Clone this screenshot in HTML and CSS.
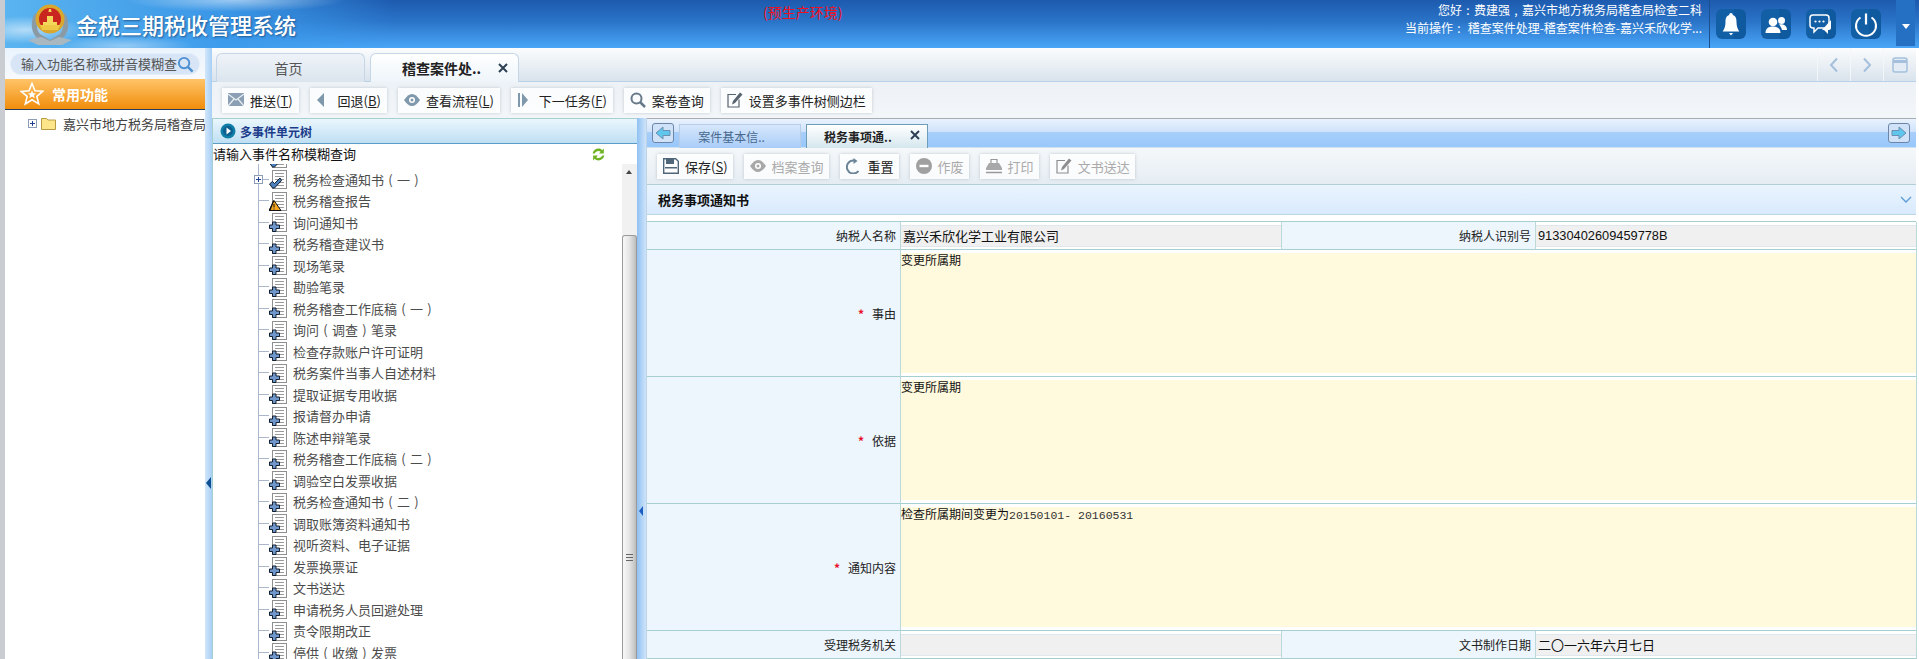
FILE: index.html
```html
<!DOCTYPE html>
<html lang="zh-CN">
<head>
<meta charset="utf-8">
<title>金税三期税收管理系统</title>
<link rel="stylesheet" href="styles.css">
</head>
<body>
<svg class="defs" width="0" height="0" aria-hidden="true">
  <symbol id="doc" viewBox="0 0 18 20">
    <rect x="3.5" y="1.5" width="14" height="18" fill="#fff" stroke="#8f8f8f"/>
    <path d="M6 4.500h9M6 7.500h9M6 10.500h9M6 13.500h9M6 16.500h9" stroke="#999"/>
  </symbol>
  <symbol id="b-plus" viewBox="0 0 18 20">
    <use href="#doc"/>
    <path d="M3.500 10h3.500v3h3.500v3.500H7v3H3.500v-3H.5V13h3z" fill="#6f97cb" stroke="#141f2e"/>
  </symbol>
  <symbol id="b-check" viewBox="0 0 18 20">
    <use href="#doc"/>
    <path d="M0.5 15l3-2.500 2 2 5.500-5.500 1.500 2.500-7 7.500h-2z" fill="#4c80bd" stroke="#141f2e"/>
  </symbol>
  <symbol id="b-warn" viewBox="0 0 18 20">
    <use href="#doc"/>
    <path d="M5 9.500l7 10H0z" fill="#f5a623" stroke="#111"/>
    <path d="M0 19.500h1.500L5 10V9.500L4 9.500z" fill="#111"/>
    <path d="M5 13v3.500M5 17.500v1" stroke="#111"/>
  </symbol>
</svg>

<div class="app">
  <header class="top">
    <svg class="emblem" viewBox="0 0 46 46" width="46" height="46">
      <path d="M9 36C3 29 4 18 8 12l4 3c-3 6-3 13 1 18l10 6 10-6c4-5 4-12 1-18l4-3c4 6 5 17-1 24l-8 5-6 3-6-3z" fill="#8b9ba6"/>
      <path d="M1 39l13-3 9 4 9-4 13 3-10 5H11z" fill="#a9b7c1"/>
      <circle cx="23" cy="18" r="14.500" fill="#d9a62e"/>
      <circle cx="23" cy="18" r="11" fill="#c8261e"/>
      <path d="M13 24h20l-2 5H15z" fill="#efc945"/>
      <path d="M16 21h14v3H16zM20 15h6v6h-6zM22 8h2l.6 3h-3.200z" fill="#f3d65a"/>
    </svg>
    <h1 class="brand">金税三期税收管理系统</h1>
    <span class="env">(预生产环境)</span>
    <div class="userinfo">
      <p>您好<span class="par">:</span>费建强<span class="par">,</span>嘉兴市地方税务局稽查局检查二科</p>
      <p>当前操作<span class="par">:</span> 稽查案件处理-稽查案件检查-嘉兴禾欣化学...</p>
    </div>
    <div class="hicons">
      <span class="hicon"><svg viewBox="0 0 30 30" width="30" height="30"><path d="M15 4c1.200 0 1.700.8 1.800 2 3 1 3.700 3.500 3.700 7 0 4 1 7 2.800 9.500H6.700C8.500 20 9.500 17 9.500 13c0-3.500.7-6 3.700-7 .1-1.200.6-2 1.800-2z" fill="#fff"/><path d="M13 24h4l-2 2.500z" fill="#fff"/></svg></span>
      <span class="hicon"><svg viewBox="0 0 30 30" width="30" height="30"><circle cx="12" cy="13" r="4.300" fill="#fff"/><circle cx="20.500" cy="11.500" r="3.500" fill="#fff"/><path d="M4.500 24c0-4.500 3-6.500 7.500-6.500s7.500 2 7.500 6.500z" fill="#fff"/><path d="M18 15.500c3-.8 8 .2 8 5.500h-5c-.5-2-1.500-3.800-3-5.500z" fill="#fff"/></svg></span>
      <span class="hicon"><svg viewBox="0 0 30 30" width="30" height="30"><path d="M7 6h13c2 0 3 1 3 3v7c0 2-1 3-3 3h-8l-4 4v-4H7c-2 0-3-1-3-3V9c0-2 1-3 3-3z" fill="#135fa6" stroke="#fff" stroke-width="1.500"/><circle cx="9.500" cy="12.500" r="1.100" fill="#fff"/><circle cx="13.500" cy="12.500" r="1.100" fill="#fff"/><circle cx="17.500" cy="12.500" r="1.100" fill="#fff"/><path d="M25 11v8c0 1-1 2-2 2h-1v4l-4-4h-2z" fill="#fff"/></svg></span>
      <span class="hicon"><svg viewBox="0 0 30 30" width="30" height="30"><path d="M9.500 8.500a10 10 0 1 0 11 0" fill="none" stroke="#fff" stroke-width="2"/><path d="M15 4.500v11" stroke="#fff" stroke-width="2.200"/></svg></span>
    </div>
    <div class="hmenu"><span class="caret"></span></div>
  </header>

  <div class="work">
    <aside class="side">
      <div class="side-search">
        <div class="searchbox">
          <span class="search-text">输入功能名称或拼音模糊查</span>
          <svg viewBox="0 0 18 18" width="17" height="17"><circle cx="7.500" cy="7.500" r="5.500" fill="none" stroke="#4d8fd0" stroke-width="2"/><path d="M11.500 11.500l5 5" stroke="#4d8fd0" stroke-width="2.500"/></svg>
        </div>
      </div>
      <div class="side-fav">
        <svg viewBox="0 0 24 24" width="24" height="24"><path d="M12 1.500l3 7.200 7.800.6-6 5 1.900 7.600L12 17.800 5.300 22l1.900-7.600-6-5 7.800-.6z" fill="none" stroke="#fff" stroke-width="1.600"/><path d="M12 8.500l1.200 2.700 3 .2-2.300 1.900.8 2.900-2.700-1.600-2.700 1.600.8-2.900-2.300-1.900 3-.2z" fill="#fff"/></svg>
        <span>常用功能</span>
      </div>
      <div class="side-tree">
        <span class="pbox"></span>
        <svg viewBox="0 0 15 14" width="15" height="14"><path d="M.5 2.500h5l1.500 1.500h7.500v9.500H.5z" fill="#fde68a" stroke="#b89a44"/></svg>
        <span class="side-label">嘉兴市地方税务局稽查局</span>
      </div>
    </aside>
    <div class="split"></div>

    <main class="main">
      <nav class="tabs">
        <span class="tab">首页</span>
        <span class="tab tab-on">稽查案件处..<svg class="x" viewBox="0 0 10 10" width="10" height="10"><path d="M1 1l8 8M9 1l-8 8" stroke="#2d4054" stroke-width="2"/></svg></span>
        <div class="tabs-ctl">
          <span class="ctl"><svg viewBox="0 0 12 16" width="12" height="16"><path d="M9 1.500L3 8l6 6.500" fill="none" stroke="#a4c0dc" stroke-width="2"/></svg></span>
          <span class="ctl"><svg viewBox="0 0 12 16" width="12" height="16"><path d="M3 1.500L9 8l-6 6.500" fill="none" stroke="#a4c0dc" stroke-width="2"/></svg></span>
          <span class="ctl"><svg viewBox="0 0 16 16" width="16" height="16"><rect x="1" y="1" width="14" height="14" rx="2" fill="#e3ecf4" stroke="#a4c0dc" stroke-width="1.500"/><path d="M1 4.500h14" stroke="#a4c0dc" stroke-width="3"/></svg></span>
        </div>
      </nav>

      <div class="bar bar-main">
        <button class="btn"><span class="ico"><svg viewBox="0 0 16 14" width="16" height="14"><rect width="16" height="13" fill="#8a9fb3"/><path d="M0 1l8 6 8-6M0 13l6-7M16 13l-6-7" fill="none" stroke="#e8eef3" stroke-width="1.200"/></svg></span>推送(<u>T</u>)</button>
        <button class="btn"><span class="ico"><svg viewBox="0 0 16 16" width="16" height="16"><path d="M8 1v14L1 8z" fill="#7f98ab"/></svg></span>回退(<u>B</u>)</button>
        <button class="btn"><span class="ico"><svg viewBox="0 0 16 14" width="16" height="14"><path d="M0 7c3-4 5-6 8-6s5 2 8 6c-3 4-5 6-8 6s-5-2-8-6z" fill="#7f98ab"/><circle cx="8" cy="7" r="3" fill="#fff"/><circle cx="8" cy="7" r="1.500" fill="#7f98ab"/></svg></span>查看流程(<u>L</u>)</button>
        <button class="btn"><span class="ico"><svg viewBox="0 0 16 16" width="16" height="16"><path d="M1 1h2v14H1zM5 1l6 7-6 7z" fill="#7f98ab"/></svg></span>下一任务(<u>F</u>)</button>
        <button class="btn"><span class="ico"><svg viewBox="0 0 16 16" width="16" height="16"><circle cx="6.500" cy="6.500" r="5" fill="none" stroke="#67798a" stroke-width="2"/><path d="M10 10l5 5" stroke="#67798a" stroke-width="2.500"/></svg></span>案卷查询</button>
        <button class="btn"><span class="ico"><svg viewBox="0 0 16 16" width="16" height="16"><path d="M12 7.500V15H1V2.500h8" fill="none" stroke="#57636e" stroke-width="1.200"/><path d="M13 .5l2.500 2L8 11l-3 1.500L6 9z" fill="#57636e"/></svg></span>设置多事件树侧边栏</button>
      </div>

      <div class="panes">
        <section class="treepane">
          <div class="tree-head">
            <svg viewBox="0 0 16 16" width="16" height="16"><circle cx="8" cy="8" r="7.500" fill="#0f7fa8"/><circle cx="8" cy="8" r="5" fill="#0c5f8f"/><path d="M6.500 4.500L11 8l-4.500 3.500z" fill="#fff"/></svg>
            <span>多事件单元树</span>
          </div>
          <div class="tree-filter">
            <span>请输入事件名称模糊查询</span>
            <svg viewBox="0 0 14 14" width="15" height="15"><path d="M1.500 6C2 3 4.500 1.500 7 1.500c1.500 0 2.800.6 3.500 1.500L12 1.500V6H7.500l1.500-1.500C8.500 4 7.800 3.700 7 3.700 5.500 3.700 4 4.600 3.500 6zM12.500 8C12 11 9.500 12.500 7 12.500c-1.500 0-2.800-.6-3.500-1.500L2 12.500V8h4.500L5 9.500c.5.500 1.200.8 2 .8 1.500 0 3-.9 3.500-2.300z" fill="#6fb324"/></svg>
          </div>
          <div class="tree-body">
            <ul class="tree">
              <li class="node"><svg class="nico"><use href="#b-check"/></svg><span class="nlabel">&nbsp;</span></li>
              <li class="node node-exp"><span class="pbox pbox-node"></span><svg class="nico"><use href="#b-check"/></svg><span class="nlabel">税务检查通知书<span class="par">(</span>一<span class="par">)</span></span></li>
              <li class="node"><svg class="nico"><use href="#b-warn"/></svg><span class="nlabel">税务稽查报告</span></li>
              <li class="node"><svg class="nico"><use href="#b-plus"/></svg><span class="nlabel">询问通知书</span></li>
              <li class="node"><svg class="nico"><use href="#b-plus"/></svg><span class="nlabel">税务稽查建议书</span></li>
              <li class="node"><svg class="nico"><use href="#b-plus"/></svg><span class="nlabel">现场笔录</span></li>
              <li class="node"><svg class="nico"><use href="#b-plus"/></svg><span class="nlabel">勘验笔录</span></li>
              <li class="node"><svg class="nico"><use href="#b-plus"/></svg><span class="nlabel">税务稽查工作底稿<span class="par">(</span>一<span class="par">)</span></span></li>
              <li class="node"><svg class="nico"><use href="#b-plus"/></svg><span class="nlabel">询问<span class="par">(</span>调查<span class="par">)</span>笔录</span></li>
              <li class="node"><svg class="nico"><use href="#b-plus"/></svg><span class="nlabel">检查存款账户许可证明</span></li>
              <li class="node"><svg class="nico"><use href="#b-plus"/></svg><span class="nlabel">税务案件当事人自述材料</span></li>
              <li class="node"><svg class="nico"><use href="#b-plus"/></svg><span class="nlabel">提取证据专用收据</span></li>
              <li class="node"><svg class="nico"><use href="#b-plus"/></svg><span class="nlabel">报请督办申请</span></li>
              <li class="node"><svg class="nico"><use href="#b-plus"/></svg><span class="nlabel">陈述申辩笔录</span></li>
              <li class="node"><svg class="nico"><use href="#b-plus"/></svg><span class="nlabel">税务稽查工作底稿<span class="par">(</span>二<span class="par">)</span></span></li>
              <li class="node"><svg class="nico"><use href="#b-plus"/></svg><span class="nlabel">调验空白发票收据</span></li>
              <li class="node"><svg class="nico"><use href="#b-plus"/></svg><span class="nlabel">税务检查通知书<span class="par">(</span>二<span class="par">)</span></span></li>
              <li class="node"><svg class="nico"><use href="#b-plus"/></svg><span class="nlabel">调取账簿资料通知书</span></li>
              <li class="node"><svg class="nico"><use href="#b-plus"/></svg><span class="nlabel">视听资料、电子证据</span></li>
              <li class="node"><svg class="nico"><use href="#b-plus"/></svg><span class="nlabel">发票换票证</span></li>
              <li class="node"><svg class="nico"><use href="#b-plus"/></svg><span class="nlabel">文书送达</span></li>
              <li class="node"><svg class="nico"><use href="#b-plus"/></svg><span class="nlabel">申请税务人员回避处理</span></li>
              <li class="node"><svg class="nico"><use href="#b-plus"/></svg><span class="nlabel">责令限期改正</span></li>
              <li class="node"><svg class="nico"><use href="#b-plus"/></svg><span class="nlabel">停供<span class="par">(</span>收缴<span class="par">)</span>发票</span></li>
            </ul>
            <div class="sb">
              <span class="sb-up"></span>
              <div class="sb-thumb"><span class="sb-grip"></span></div>
            </div>
          </div>
        </section>

        <div class="split split-in"></div>

        <section class="form">
          <div class="ftabs">
            <span class="scroll-btn"><svg viewBox="0 0 16 14" width="16" height="14"><path d="M8 1L1 7l7 6V9.500h7v-5H8z" fill="#5fc6ee" stroke="#6e8fb0"/></svg></span>
            <span class="ftab">案件基本信..</span>
            <span class="ftab ftab-on">税务事项通..<svg class="x" viewBox="0 0 10 10" width="10" height="10"><path d="M1 1l8 8M9 1l-8 8" stroke="#2d4054" stroke-width="2"/></svg></span>
            <span class="scroll-btn scroll-end"><svg viewBox="0 0 16 14" width="16" height="14"><path d="M8 1l7 6-7 6V9.500H1v-5h7z" fill="#5fc6ee" stroke="#6e8fb0"/></svg></span>
          </div>
          <div class="bar bar-form">
            <button class="btn"><span class="ico"><svg viewBox="0 0 16 16" width="16" height="16"><path d="M.7.7h12l2.600 2.600v12H.7z" fill="#fff" stroke="#50677a" stroke-width="1.400"/><path d="M3 1h8v5H3zM2 9h12v1.500H2z" fill="#50677a"/></svg></span>保存(<u>S</u>)</button>
            <button class="btn off"><span class="ico"><svg viewBox="0 0 16 14" width="16" height="14"><path d="M0 7c3-4 5-6 8-6s5 2 8 6c-3 4-5 6-8 6s-5-2-8-6z" fill="#a8a8a8"/><circle cx="8" cy="7" r="3" fill="#fff"/><circle cx="8" cy="7" r="1.500" fill="#a8a8a8"/></svg></span>档案查询</button>
            <button class="btn"><span class="ico"><svg viewBox="0 0 16 16" width="16" height="16"><path d="M12.500 13A6.500 6.500 0 1 1 8 2.500" fill="none" stroke="#6b8497" stroke-width="2"/><path d="M7.500 0v6l4-3z" fill="#6b8497"/></svg></span>重置</button>
            <button class="btn off"><span class="ico"><svg viewBox="0 0 16 16" width="16" height="16"><circle cx="8" cy="8" r="8" fill="#a0a0a0"/><path d="M3.500 6.800h9v2.400h-9z" fill="#fff"/></svg></span>作废</button>
            <button class="btn off"><span class="ico"><svg viewBox="0 0 16 16" width="16" height="16"><path d="M5 5V1.500h6V5" fill="none" stroke="#999" stroke-width="1.200"/><path d="M3 5h10l3 5v2H0v-2z" fill="#a8a8a8"/><path d="M0 14.500h16" stroke="#999" stroke-width="1.500"/></svg></span>打印</button>
            <button class="btn off"><span class="ico"><svg viewBox="0 0 16 16" width="16" height="16"><path d="M12 7.500V15H1V2.500h8" fill="none" stroke="#8d8d8d" stroke-width="1.200"/><path d="M13 .5l2.500 2L8 11l-3 1.500L6 9z" fill="#8d8d8d"/></svg></span>文书送达</button>
          </div>
          <div class="sect">
            <h2>税务事项通知书</h2>
            <svg viewBox="0 0 12 8" width="12" height="8"><path d="M1 1l5 5 5-5" fill="none" stroke="#5b9bd5" stroke-width="1.300"/></svg>
          </div>
          <div class="grid">
            <div class="lab row-s">纳税人名称</div>
            <div class="val row-s"><div class="field">嘉兴禾欣化学工业有限公司</div></div>
            <div class="lab row-s">纳税人识别号</div>
            <div class="val row-s"><div class="field field-num">91330402609459778B</div></div>

            <div class="lab row-l"><i class="req">*</i>事由</div>
            <div class="val row-l span3"><div class="area">变更所属期</div></div>

            <div class="lab row-l"><i class="req">*</i>依据</div>
            <div class="val row-l span3"><div class="area">变更所属期</div></div>

            <div class="lab row-l"><i class="req">*</i>通知内容</div>
            <div class="val row-l span3"><div class="area">检查所属期间变更为<span class="mono">20150101- 20160531</span></div></div>

            <div class="lab row-s">受理税务机关</div>
            <div class="val row-s"><div class="field"></div></div>
            <div class="lab row-s">文书制作日期</div>
            <div class="val row-s"><div class="field">二〇一六年六月七日</div></div>
          </div>
        </section>
      </div>
    </main>
  </div>
</div>
</body>
</html>
```
FILE: styles.css
```css
* { box-sizing: border-box; }
html, body { margin: 0; padding: 0; }
body {
  width: 1919px;
  height: 659px;
  overflow: hidden;
  background: #fff;
  font-family: "Noto Sans CJK SC", "Liberation Sans", sans-serif;
  font-size: 13px;
  color: #222;
}
.defs { position: absolute; }
p, h1, h2, ul { margin: 0; padding: 0; }
ul { list-style: none; }
svg { display: block; flex: none; }
.par { display: inline-block; width: 1em; text-align: center; }

.app {
  height: 659px;
  display: flex;
  flex-direction: column;
  border-left: 5px solid #c9cdd1;
}

/* header */
.top {
  height: 48px;
  flex: none;
  display: flex;
  align-items: center;
  color: #fff;
  background:
    radial-gradient(ellipse 60px 14px at 20px 30px, rgba(255,255,255,.55), transparent),
    radial-gradient(ellipse 70px 10px at 120px 46px, rgba(255,255,255,.4), transparent),
    radial-gradient(ellipse 110px 12px at 230px 0, rgba(255,255,255,.5), transparent),
    linear-gradient(90deg, rgba(90,180,240,1) 0, rgba(60,155,235,.9) 220px, rgba(40,120,215,0) 390px),
    linear-gradient(180deg, #1d5aae 0, #2a74c8 45%, #4aa6f8 100%);
}
.emblem { margin-left: 22px; }
.brand {
  margin-left: 3px;
  font-size: 22px;
  line-height: 30px;
  font-weight: 500;
  text-shadow: 1px 1px 2px rgba(20,60,110,.7);
  white-space: nowrap;
}
.env {
  align-self: flex-start;
  margin: 2px 0 0 467px;
  color: #f01020;
  font-size: 14px;
  line-height: 20px;
}
.userinfo {
  margin-left: auto;
  padding-right: 7px;
  text-align: right;
  font-size: 12px;
  line-height: 18px;
  height: 48px;
  padding-top: 1px;
  border-right: 1px solid #1b4f8f;
}
.hicons { display: flex; gap: 15px; margin-left: 6px; }
.hicon {
  width: 30px;
  height: 30px;
  border-radius: 6px;
  background: linear-gradient(90deg, #135fa6 60%, #0f5a9f 60%);
}
.hmenu {
  width: 19px;
  height: 46px;
  margin: 0 4px 2px 15px;
  align-self: flex-start;
  background: #2670c4;
  display: flex;
  align-items: center;
  justify-content: center;
}
.caret {
  border: 4px solid transparent;
  border-top: 5px solid #fff;
  border-bottom: 0;
  margin-top: 6px;
}

/* work area */
.work { flex: 1; display: flex; min-height: 0; }
.side { width: 200px; flex: none; display: flex; flex-direction: column; background: #fff; }
.side-search {
  height: 31px;
  padding: 5px 5px 4px 5px;
  background: linear-gradient(180deg, #eaf3fc, #f7fafd);
}
.searchbox {
  height: 22px;
  border-radius: 11px;
  background: #d7e5f6;
  border: 1px solid #e4eefa;
  display: flex;
  align-items: center;
  padding-left: 10px;
}
.search-text { color: #555; line-height: 20px; white-space: nowrap; }
.side-fav {
  height: 31px;
  display: flex;
  align-items: center;
  gap: 8px;
  padding-left: 15px;
  color: #fff;
  font-weight: 700;
  font-size: 14px;
  background: linear-gradient(180deg, #ffc468, #f08d0c);
  border-bottom: 1px solid #23405f;
}
.side-tree {
  position: relative;
  display: flex;
  align-items: center;
  height: 26px;
  padding: 0 0 0 23px;
  overflow: hidden;
  white-space: nowrap;
}
.side-tree svg { margin: 0 7px 0 4px; }
.side-label { color: #444; }
.pbox {
  display: block;
  flex: none;
  width: 9px;
  height: 9px;
  border: 1px solid #8d9db5;
  background:
    linear-gradient(#1f3f8f, #1f3f8f) center / 5px 1px no-repeat,
    linear-gradient(#1f3f8f, #1f3f8f) center / 1px 5px no-repeat,
    #fff;
}
.split {
  width: 7px;
  flex: none;
  position: relative;
  background: linear-gradient(90deg, #d2e6fa, #a8cff5);
}
.split::after {
  content: "";
  position: absolute;
  left: 1px;
  top: 429px;
  border: 6px solid transparent;
  border-left: 0;
  border-right: 5px solid #0e4f93;
}

/* main */
.main { flex: 1; min-width: 0; display: flex; flex-direction: column; padding-right: 3px; }
.tabs {
  height: 34px;
  flex: none;
  display: flex;
  align-items: flex-end;
  gap: 5px;
  padding-left: 4px;
  background: linear-gradient(180deg, #fbfcfd, #d9e3ec);
  border-bottom: 1px solid #b9d1e6;
}
.tab {
  position: relative;
  width: 149px;
  height: 29px;
  margin-bottom: -1px;
  padding-right: 4px;
  border: 1px solid #c4d6e8;
  border-bottom: 0;
  border-radius: 6px 6px 0 0;
  text-align: center;
  font-size: 14px;
  line-height: 29px;
  color: #555;
  background: linear-gradient(180deg, #eef3f8, #dbe5ee);
}
.tab-on { font-weight: 700; color: #222; padding-right: 6px; background: linear-gradient(180deg, #fff, #eef5fa); }
.x { position: absolute; top: 9px; right: 10px; }
.tabs-ctl { display: flex; margin-left: auto; align-self: stretch; }
.ctl {
  width: 33px;
  display: flex;
  align-items: center;
  justify-content: center;
  border-left: 1px solid #f4f7fa;
}

.bar { flex: none; display: flex; align-items: center; gap: 11px; }
.bar-main { height: 36px; padding-left: 10px; background: linear-gradient(180deg, #edf2f7, #f3f6f9); }
.btn {
  display: flex;
  align-items: center;
  height: 25px;
  padding: 0 6px;
  border: 0;
  font: inherit;
  color: #222;
  white-space: nowrap;
  background: rgba(255,255,255,.75);
  box-shadow: 0 0 3px rgba(170,180,190,.7);
}
.btn.off { color: #aaa; }
.ico { width: 22px; flex: none; }

.panes { flex: 1; min-height: 0; display: flex; }
.treepane {
  width: 425px;
  flex: none;
  display: flex;
  flex-direction: column;
  border: 1px solid #a6d0d0;
  border-bottom: 0;
  border-right: 0;
  background: #fff;
}
.tree-head {
  height: 25px;
  flex: none;
  display: flex;
  align-items: center;
  gap: 4px;
  padding-left: 7px;
  font-size: 12px;
  font-weight: 700;
  color: #1c3b8a;
  background: linear-gradient(180deg, #eaf6fd, #bfdff3);
  border-bottom: 1px solid #5b9cc6;
}
.tree-filter {
  height: 20px;
  flex: none;
  display: flex;
  align-items: center;
  color: #111;
  line-height: 20px;
}
.tree-filter svg { margin-left: 235px; }
.tree-body { flex: 1; min-height: 0; display: flex; overflow: hidden; }
.tree { flex: 1; min-width: 0; margin-top: -17px; }
.node {
  position: relative;
  height: 21.5px;
  display: flex;
  align-items: center;
  padding-left: 56px;
  background:
    linear-gradient(#a9b6cc, #a9b6cc) 45px 50% / 11px 1px no-repeat,
    linear-gradient(#a9b6cc, #a9b6cc) 45px 0 / 1px 100% no-repeat;
}
.nico { width: 18px; height: 20px; }
.nlabel { margin-left: 6px; color: #4c4c4c; line-height: 21px; white-space: nowrap; }
.pbox-node { position: absolute; left: 41px; top: 6px; }
.sb {
  position: relative;
  width: 15px;
  flex: none;
  padding-top: 71px;
  background: #f1f1f1;
}
.sb-up {
  position: absolute;
  top: 6px;
  left: 4px;
  border: 3px solid transparent;
  border-top: 0;
  border-bottom: 4px solid #444;
}
.sb-thumb {
  height: 600px;
  position: relative;
  border: 1px solid #9a9a9a;
  border-bottom: 0;
  border-radius: 3px 3px 0 0;
  background: linear-gradient(90deg, #f8f8f8, #e4e4e4 50%, #bdbdbd);
}
.sb-grip {
  position: absolute;
  left: 3px;
  top: 318px;
  width: 7px;
  height: 8px;
  background: repeating-linear-gradient(180deg, #666 0 1px, transparent 1px 3px);
}
.split-in { width: 9px; background: linear-gradient(90deg, #8fc1f2, #cfe4fa); }
.split-in::after {
  left: 2px;
  top: 388px;
  border-width: 5px;
  border-left: 0;
  border-right: 4px solid #1d5fc0;
}

.form { flex: 1; min-width: 0; display: flex; flex-direction: column; border-left: 1px solid #bcd4e6; }
.ftabs {
  height: 30px;
  flex: none;
  display: flex;
  align-items: flex-end;
  gap: 5px;
  padding-left: 5px;
  border-top: 1px solid #a9adb2;
  border-bottom: 1px solid #cfe0ee;
  background: linear-gradient(180deg, #e9f2fe 0, #d0e3fb 45%, #a9cffa 45%, #98c7fb 100%);
}
.scroll-btn {
  width: 22px;
  height: 20px;
  margin-bottom: 4px;
  border: 1px solid #6d86a8;
  border-radius: 3px;
  background: #cfe2f8;
  display: flex;
  align-items: center;
  justify-content: center;
}
.scroll-end { margin-left: auto; margin-right: 6px; }
.ftab {
  position: relative;
  width: 122px;
  height: 24px;
  margin-bottom: -1px;
  border: 1px solid #b7cde6;
  border-bottom: 0;
  padding-right: 17px;
  text-align: center;
  font-size: 12px;
  line-height: 24px;
  color: #47698f;
  background: linear-gradient(180deg, #d6e7fb, #a9cdf8);
}
.ftab-on {
  font-weight: 700;
  color: #222;
  padding-right: 18px;
  border-color: #6f9db8;
  background: linear-gradient(180deg, #fff, #d5e7ee);
}
.ftab-on .x { top: 5px; right: 7px; }
.bar-form {
  height: 37px;
  padding-left: 10px;
  background: linear-gradient(180deg, #f5f8fa, #e5edf3);
  border-bottom: 1px solid #b0cdd8;
}
.bar-form .btn { padding-right: 5px; }
.sect {
  height: 30px;
  flex: none;
  display: flex;
  align-items: center;
  justify-content: space-between;
  padding: 0 4px 0 11px;
  background: linear-gradient(180deg, #eaf4fe, #d9eafd);
  border-bottom: 1px solid #bcd6e6;
}
.sect h2 { font-size: 13px; font-weight: 700; color: #111; }

.grid {
  margin-top: 6px;
  display: grid;
  grid-template-columns: 254px 381px 254px 381px;
  grid-auto-rows: min-content;
  border-top: 1px solid #a6d0d0;
}
.lab {
  display: flex;
  align-items: center;
  justify-content: flex-end;
  padding-right: 4px;
  font-size: 12px;
  color: #222;
  background: #edf5fd;
  border-right: 1px solid #bcd8d8;
  border-bottom: 1px solid #a6d0d0;
}
.val { background: #fff; border-bottom: 1px solid #a6d0d0; border-right: 1px solid #bcd8d8; }
.row-s { height: 28px; }
.row-l { height: 127px; }
.span3 { grid-column: span 3; }
.field {
  height: 22px;
  margin-top: 3px;
  padding-left: 2px;
  font-size: 13px;
  line-height: 20px;
  color: #111;
  background: #f0f0f0;
  border-top: 1px solid #dfe8ef;
  border-bottom: 1px solid #dfe8ef;
}
.field-num { font-family: "Liberation Sans", sans-serif; padding-left: 2px; font-size: 12.800px; }
.area {
  height: 120px;
  margin-top: 3px;
  font-size: 12px;
  line-height: 14px;
  color: #111;
  background: #fff9dd;
}
.mono { font-family: "Liberation Mono", monospace; font-size: 11.500px; color: #333; }
.req { font-style: normal; color: #e8102a; font-weight: 700; margin-right: 8px; }
```
